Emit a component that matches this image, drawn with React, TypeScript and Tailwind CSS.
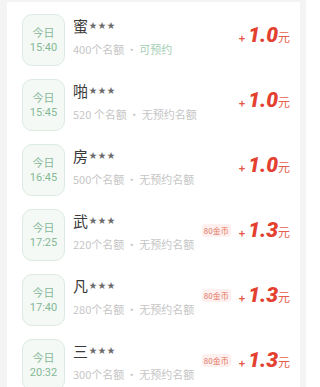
import React from "react";

type Slot = {
  time: string;
  name: string;
  quota: string;
  status: string;
  open?: boolean;
  coins?: string;
  amount: string;
};

const slots: Slot[] = [
  { time: "15:40", name: "蜜", quota: "400个名额", status: "可预约", open: true, amount: "1.0" },
  { time: "15:45", name: "啪", quota: "520 个名额", status: "无预约名额", amount: "1.0" },
  { time: "16:45", name: "房", quota: "500个名额", status: "无预约名额", amount: "1.0" },
  { time: "17:25", name: "武", quota: "220个名额", status: "无预约名额", coins: "80金币", amount: "1.3" },
  { time: "17:40", name: "凡", quota: "280个名额", status: "无预约名额", coins: "80金币", amount: "1.3" },
  { time: "20:32", name: "三", quota: "300个名额", status: "无预约名额", coins: "80金币", amount: "1.3" },
];

const cjk = "font-['Noto_Sans_CJK_SC','Noto_Sans',sans-serif]";

// ── One slot row ──────────────────────────────────────────────────────────────

function SlotRow({ slot }: { slot: Slot }) {
  return (
    <div className="flex h-[65px] shrink-0 items-center">
      <div className="flex h-[52px] w-[43px] shrink-0 flex-col items-center justify-center rounded-[10px] border border-[#dcebe1] bg-[#f4f9f5] text-[11px] leading-[15px] text-[#86b898]">
        <span>今日</span>
        <span className="font-['Roboto',sans-serif]">{slot.time}</span>
      </div>

      <div className="ml-[8px] flex min-w-0 flex-1 flex-col self-start pt-[10px]">
        <div className="flex items-start leading-[18px]">
          <span className="text-[15px] text-[#3a3a3a]">{slot.name}</span>
          <span className="ml-[1px] mt-[-1px] text-[8px] tracking-[1px] text-[#6a6a6a]">★★★</span>
        </div>
        <div className="mt-[7px] whitespace-nowrap text-[11px] leading-[14px] text-[#c6c6c6]">
          {slot.quota}
          <span className="mx-[2px]">·</span>
          <span className={slot.open ? "text-[#a6cfb5]" : ""}>{slot.status}</span>
        </div>
      </div>

      <div className="mt-[-8px] flex shrink-0 items-center">
        {slot.coins && (
          <span className="mr-[8px] rounded-[3px] bg-[#fdf0ee] px-[2px] text-[8px] leading-[13px] text-[#e47563]">
            {slot.coins}
          </span>
        )}
        <span className="mt-[5px] text-[11px] font-bold text-[#e5553f]">+</span>
        <span className="ml-[3px] font-['Roboto',sans-serif] text-[21px] font-black italic leading-none text-[#e3402f]">
          {slot.amount}
        </span>
        <span className="ml-[0px] mt-[3px] text-[12px] text-[#e8604c]">元</span>
      </div>
    </div>
  );
}

export default function App() {
  return (
    <div className={`h-[387px] w-[306px] overflow-hidden bg-[#f4f4f4] pt-[2px] ${cjk}`}>
      <div className="ml-[7px] mr-[6px] flex flex-col bg-white pl-[15px] pr-[10px] pt-[5px]">
        {slots.map((s) => (
          <SlotRow key={s.time} slot={s} />
        ))}
      </div>
    </div>
  );
}
